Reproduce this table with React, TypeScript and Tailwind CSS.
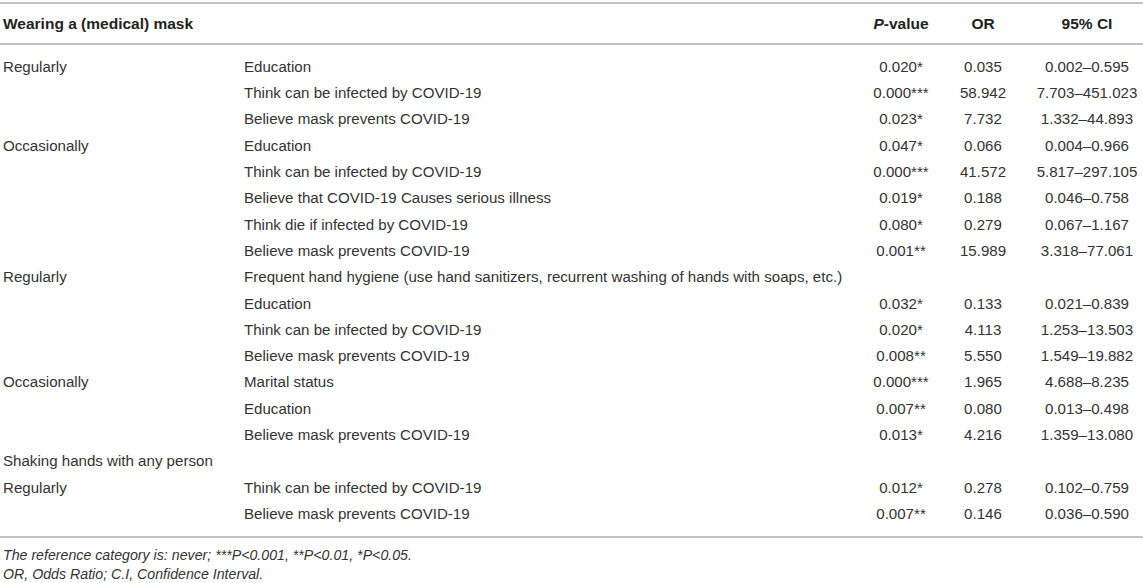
import React from "react";

type Row = { a?: string; b?: string; p?: string; or?: string; ci?: string };

const rows: Row[] = [
  { a: "Regularly", b: "Education", p: "0.020*", or: "0.035", ci: "0.002–0.595" },
  { b: "Think can be infected by COVID-19", p: "0.000***", or: "58.942", ci: "7.703–451.023" },
  { b: "Believe mask prevents COVID-19", p: "0.023*", or: "7.732", ci: "1.332–44.893" },
  { a: "Occasionally", b: "Education", p: "0.047*", or: "0.066", ci: "0.004–0.966" },
  { b: "Think can be infected by COVID-19", p: "0.000***", or: "41.572", ci: "5.817–297.105" },
  { b: "Believe that COVID-19 Causes serious illness", p: "0.019*", or: "0.188", ci: "0.046–0.758" },
  { b: "Think die if infected by COVID-19", p: "0.080*", or: "0.279", ci: "0.067–1.167" },
  { b: "Believe mask prevents COVID-19", p: "0.001**", or: "15.989", ci: "3.318–77.061" },
  { a: "Regularly", b: "Frequent hand hygiene (use hand sanitizers, recurrent washing of hands with soaps, etc.)" },
  { b: "Education", p: "0.032*", or: "0.133", ci: "0.021–0.839" },
  { b: "Think can be infected by COVID-19", p: "0.020*", or: "4.113", ci: "1.253–13.503" },
  { b: "Believe mask prevents COVID-19", p: "0.008**", or: "5.550", ci: "1.549–19.882" },
  { a: "Occasionally", b: "Marital status", p: "0.000***", or: "1.965", ci: "4.688–8.235" },
  { b: "Education", p: "0.007**", or: "0.080", ci: "0.013–0.498" },
  { b: "Believe mask prevents COVID-19", p: "0.013*", or: "4.216", ci: "1.359–13.080" },
  { a: "Shaking hands with any person" },
  { a: "Regularly", b: "Think can be infected by COVID-19", p: "0.012*", or: "0.278", ci: "0.102–0.759" },
  { b: "Believe mask prevents COVID-19", p: "0.007**", or: "0.146", ci: "0.036–0.590" },
];

const grid = "grid grid-cols-[241px_623px_68px_96px_112px] pl-[3px]";

export default function App() {
  return (
    <div
      className="w-[1143px] h-[583px] bg-white text-[#333333] pt-[2px]"
      style={{ fontFamily: '"Liberation Sans", Arial, sans-serif' }}
    >
      <div className="border-t-2 border-b-2 border-[#c4c4c4]">
        <div className={`${grid} h-[39px] items-center text-[15.5px] font-bold text-[#222222]`}>
          <div className="whitespace-nowrap">Wearing a (medical) mask</div>
          <div></div>
          <div className="text-center whitespace-nowrap">
            <span className="italic">P</span>-value
          </div>
          <div className="text-center">OR</div>
          <div className="text-center whitespace-nowrap">95% CI</div>
        </div>
      </div>
      <div className="border-b-2 border-[#c4c4c4] pt-[9px] pb-[9px] text-[15.1px]">
        {rows.map((r, i) => (
          <div key={i} className={`${grid} h-[26.3px] items-center`}>
            <div className="whitespace-nowrap">{r.a ?? ""}</div>
            <div className="whitespace-nowrap">{r.b ?? ""}</div>
            <div className="text-center whitespace-nowrap">{r.p ?? ""}</div>
            <div className="text-center whitespace-nowrap">{r.or ?? ""}</div>
            <div className="text-center whitespace-nowrap">{r.ci ?? ""}</div>
          </div>
        ))}
      </div>
      <div className="pl-[3px] pt-[8px] italic text-[14.2px] leading-[19px] text-[#333333]">
        <div>The reference category is: never; ***P&lt;0.001, **P&lt;0.01, *P&lt;0.05.</div>
        <div>OR, Odds Ratio; C.I, Confidence Interval.</div>
      </div>
    </div>
  );
}
